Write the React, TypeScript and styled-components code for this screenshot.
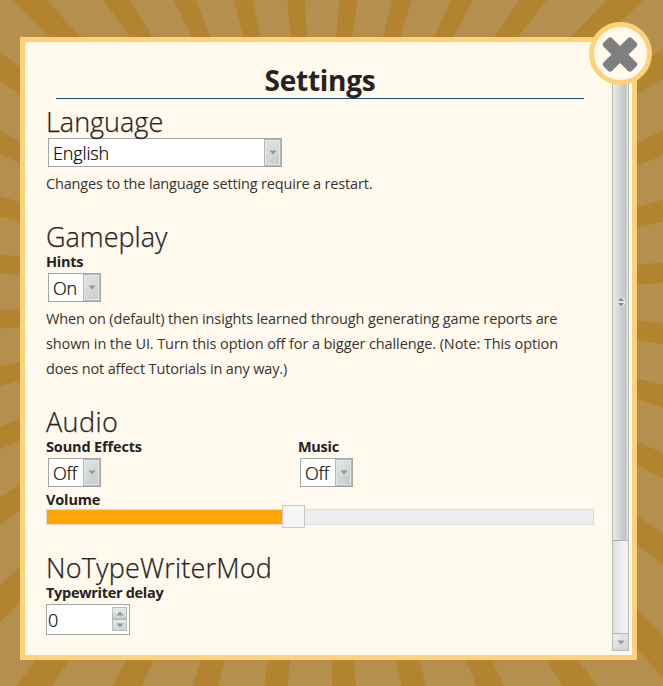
import React from "react";
import styled, { createGlobalStyle } from "styled-components";

const GlobalStyle = createGlobalStyle`
  * { box-sizing: border-box; }
  body {
    margin: 0;
    overflow: hidden;
    font-family: "Open Sans", "Noto Sans", sans-serif;
    color: #26221f;
  }
`;

const Backdrop = styled.div`
  width: 663px;
  height: 686px;
  padding: 37px 26px 26px 20px;
  background: repeating-conic-gradient(
    from 1deg at 317px 297px,
    #b58f4e 0deg 3.2deg,
    #b38430 3.35deg 6.65deg,
    #b58f4e 6.8deg 10deg
  );
`;

const Dialog = styled.main`
  position: relative;
  display: flex;
  width: 617px;
  height: 623px;
  border: 5px solid #ffd27a;
  background: #fff9ee;
`;

const Content = styled.div`
  width: 548px;
  margin-left: 21px;
`;

const Title = styled.h1`
  height: 57px;
  margin: 0 10px 5px;
  padding-top: 18px;
  border-bottom: 1px solid #1e4a78;
  font-size: 28px;
  line-height: 40px;
  font-weight: 700;
  letter-spacing: -0.25px;
  text-align: center;
`;

const Section = styled.section<{ $gap?: number }>`
  margin-bottom: ${(p) => p.$gap ?? 23}px;
`;

const Heading = styled.h2<{ $spacing?: number }>`
  height: 32px;
  margin: 0;
  padding-top: 2px;
  font-size: 27px;
  line-height: 32px;
  font-weight: 300;
  -webkit-text-stroke: 0.25px #26221f;
  letter-spacing: ${(p) => p.$spacing ?? 0}px;
`;

const Label = styled.div<{ $spacing?: number }>`
  height: 20px;
  padding-top: 1px;
  font-size: 14.5px;
  line-height: 20px;
  font-weight: 700;
  letter-spacing: ${(p) => p.$spacing ?? -0.3}px;
  white-space: nowrap;
`;

const Note = styled.p`
  margin: 0;
  padding-top: 2px;
  font-size: 14.5px;
  line-height: 25px;
  letter-spacing: -0.16px;
  white-space: nowrap;
  color: #39342f;
`;

const NoteLine = styled.span<{ $spacing?: number }>`
  display: block;
  letter-spacing: ${(p) => p.$spacing ?? -0.14}px;
`;

const SelectBox = styled.div<{ $width: number }>`
  display: flex;
  width: ${(p) => p.$width}px;
  height: 29px;
  margin: 2px;
  border: 1px solid #a3a7a5;
  background: #fff;
`;

const SelectValue = styled.span`
  flex: 1;
  height: 27px;
  padding-left: 4px;
  font-size: 18px;
  line-height: 28px;
  font-weight: 300;
  -webkit-text-stroke: 0.2px #000;
  letter-spacing: -0.15px;
  color: #000;
`;

const SelectButton = styled.span`
  display: flex;
  align-items: center;
  justify-content: center;
  width: 17px;
  border: 1px solid #b4b9b6;
  background: linear-gradient(135deg, #e2e6e4, #c6cbc8);
  box-shadow: inset 0 0 0 1px #e3e7e5;
`;

const Columns = styled.div`
  display: grid;
  grid-template-columns: 252px 1fr;
`;

const Track = styled.div`
  display: flex;
  align-items: center;
  height: 16px;
  border: 1px solid #dddcd9;
  background: #ededed;
`;

const Fill = styled.div`
  width: 235px;
  height: 14px;
  background: #ffa500;
`;

const Thumb = styled.div`
  flex: none;
  width: 23px;
  height: 23px;
  margin-bottom: 1px;
  border: 1px solid #c9c9c9;
  background: #f5f5f6;
`;

const NumberBox = styled.div`
  display: flex;
  justify-content: space-between;
  width: 84px;
  height: 31px;
  margin-top: 2px;
  padding: 2px 2px 0 1px;
  border: 1px solid #a3a7a5;
  background: #fff;
  font-size: 18px;
  line-height: 27px;
  font-weight: 300;
  color: #000;
  -webkit-text-stroke: 0.2px #000;
`;

const Spinner = styled.div`
  display: grid;
  grid-template-rows: 12px 12px;
  width: 15px;
`;

const SpinButton = styled.div`
  display: flex;
  align-items: center;
  justify-content: center;
  border: 1px solid #b9bdba;
  background: linear-gradient(#e8ebe9, #d0d4d1);
`;

const ScrollTrack = styled.div`
  display: flex;
  flex-direction: column;
  width: 17px;
  height: 609px;
  margin-left: 18px;
  border: 1px solid #b3bab4;
  background: linear-gradient(90deg, #dcdfdc, #eff0ee 60%, #f3f4f1);
`;

const ScrollThumb = styled.div`
  display: flex;
  align-items: center;
  justify-content: center;
  height: 498px;
  padding-top: 20px;
  border-bottom: 1px solid #aab0ab;
  background: linear-gradient(90deg, #e9ebe9 0, #d7dad7 35%, #bfc4c0 85%, #aeb4b0 86%, #e6e8e6 93%);
`;

const ScrollArrow = styled.div`
  display: flex;
  align-items: center;
  justify-content: center;
  height: 17px;
  margin-top: auto;
  border-top: 1px solid #b3bab4;
  background: linear-gradient(135deg, #edefed, #cfd3d0);
`;

const CloseButton = styled.button`
  position: absolute;
  top: -20px;
  right: -20px;
  display: flex;
  align-items: center;
  justify-content: center;
  width: 63px;
  height: 63px;
  padding: 0;
  border: 5px solid #ffd27a;
  border-radius: 50%;
  background: #fff9ee;
`;

const Arrow = ({ up = false }: { up?: boolean }) => (
  <svg width="8" height="5" viewBox="0 0 8 5">
    <path d={up ? "M0.5 4.5L4 0.5L7.5 4.5Z" : "M0.5 0.5L4 4.5L7.5 0.5Z"} fill="#939895" />
  </svg>
);

const Select = ({ value, width = 53 }: { value: string; width?: number }) => (
  <SelectBox $width={width}>
    <SelectValue>{value}</SelectValue>
    <SelectButton><Arrow /></SelectButton>
  </SelectBox>
);

export default function App() {
  return (
    <Backdrop>
      <GlobalStyle />
      <Dialog>
        <Content>
          <Title>Settings</Title>
          <Section>
            <Heading>Language</Heading>
            <Select value="English" width={234} />
            <Note>Changes to the language setting require a restart.</Note>
          </Section>
          <Section>
            <Heading>Gameplay</Heading>
            <Label>Hints</Label>
            <Select value="On" />
            <Note>
              <NoteLine>When on (default) then insights learned through generating game reports are</NoteLine>
              <NoteLine $spacing={-0.1}>shown in the UI. Turn this option off for a bigger challenge. (Note: This option</NoteLine>
              <NoteLine>does not affect Tutorials in any way.)</NoteLine>
            </Note>
          </Section>
          <Section $gap={25}>
            <Heading $spacing={0.4}>Audio</Heading>
            <Columns>
              <div>
                <Label $spacing={-0.15}>Sound Effects</Label>
                <Select value="Off" />
              </div>
              <div>
                <Label>Music</Label>
                <Select value="Off" />
              </div>
            </Columns>
            <Label $spacing={-0.15}>Volume</Label>
            <Track>
              <Fill />
              <Thumb />
            </Track>
          </Section>
          <Section>
            <Heading $spacing={0.2}>NoTypeWriterMod</Heading>
            <Label>Typewriter delay</Label>
            <NumberBox>
              0
              <Spinner>
                <SpinButton><Arrow up /></SpinButton>
                <SpinButton><Arrow /></SpinButton>
              </Spinner>
            </NumberBox>
          </Section>
        </Content>
        <ScrollTrack>
          <ScrollThumb>
            <svg width="8" height="10" viewBox="0 0 8 10">
              <circle cx="4" cy="5" r="4.5" fill="#e4e7e4" />
              <path d="M1 4L4 0.8L7 4ZM1 6L4 9.2L7 6Z" fill="#858a86" />
            </svg>
          </ScrollThumb>
          <ScrollArrow><Arrow /></ScrollArrow>
        </ScrollTrack>
        <CloseButton aria-label="Close">
          <svg width="41" height="41" viewBox="0 0 41 41">
            <g fill="#7f7f7f">
              <rect x="0" y="15.5" width="40" height="12" rx="3" transform="rotate(45 20 21.5)" />
              <rect x="0" y="15.5" width="40" height="12" rx="3" transform="rotate(-45 20 21.5)" />
            </g>
          </svg>
        </CloseButton>
      </Dialog>
    </Backdrop>
  );
}
